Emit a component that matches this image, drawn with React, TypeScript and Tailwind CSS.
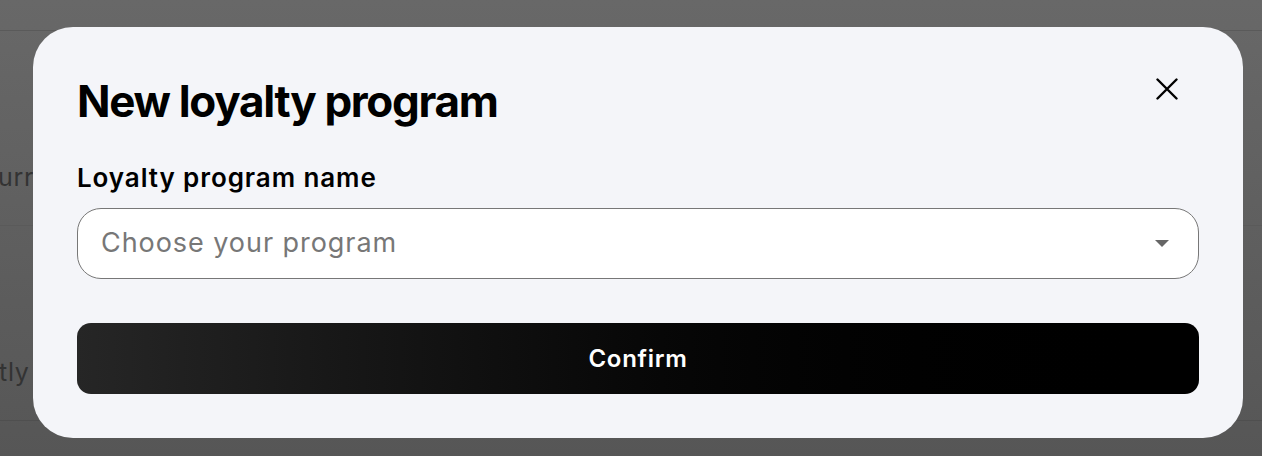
import React from "react";

const App = () => {
  return (
    <div
      className="relative w-[1262px] h-[456px] overflow-hidden bg-gradient-to-b from-[#686868] to-[#565656]"
      style={{ fontFamily: "Inter, 'Noto Sans', sans-serif" }}
    >
      {/* page behind the overlay */}
      <div className="flex flex-col">
        <div className="h-[31px] border-b border-[#5a5a5a]" />
        <div className="h-[195px] border-b border-[#5a5a5a] flex items-end pb-[34px]">
          <span className="text-[25px] leading-[28px] tracking-[0.03em] text-[#333] -ml-[2px]">urrent</span>
        </div>
        <div className="h-[195px] border-b border-[#4f4f4f] flex items-end pb-[34px]">
          <span className="text-[25px] leading-[28px] tracking-[0.03em] text-[#333] -ml-[1px]">tly loyal</span>
        </div>
      </div>

      {/* modal */}
      <div className="absolute left-[33px] top-[27px] w-[1210px] h-[411px] rounded-[40px] bg-[#f4f5f9] px-[44px] pt-[50px]">
        <div className="flex items-start justify-between">
          <h2 className="text-[44px] leading-[48px] font-bold tracking-[-0.03em] text-black">
            New loyalty program
          </h2>
          <button className="mt-[1px] mr-[21px] text-black">
            <svg width="22" height="22" viewBox="0 0 22 22">
              <path d="M1.5 1.5l19 19M20.5 1.5l-19 19" stroke="#000" strokeWidth="2.4" strokeLinecap="round" />
            </svg>
          </button>
        </div>

        <label className="block mt-[38px] text-[26px] leading-[30px] font-semibold tracking-[0.035em] text-black">
          Loyalty program name
        </label>

        <div className="mt-[15px] h-[71px] w-[1122px] rounded-[24px] border border-[#777] bg-white flex items-center justify-between pl-[23px] pr-[29px]">
          <span className="text-[27px] tracking-[0.035em] text-[#777]">Choose your program</span>
          <svg width="14" height="8" viewBox="0 0 14 8">
            <path d="M0 0h14l-7 7z" fill="#666" />
          </svg>
        </div>

        <button className="mt-[44px] h-[71px] w-[1122px] rounded-[14px] bg-gradient-to-r from-[#262626] to-[#000] flex items-center justify-center text-white text-[24px] font-semibold tracking-[0.03em]">
          Confirm
        </button>
      </div>
    </div>
  );
};

export default App;
